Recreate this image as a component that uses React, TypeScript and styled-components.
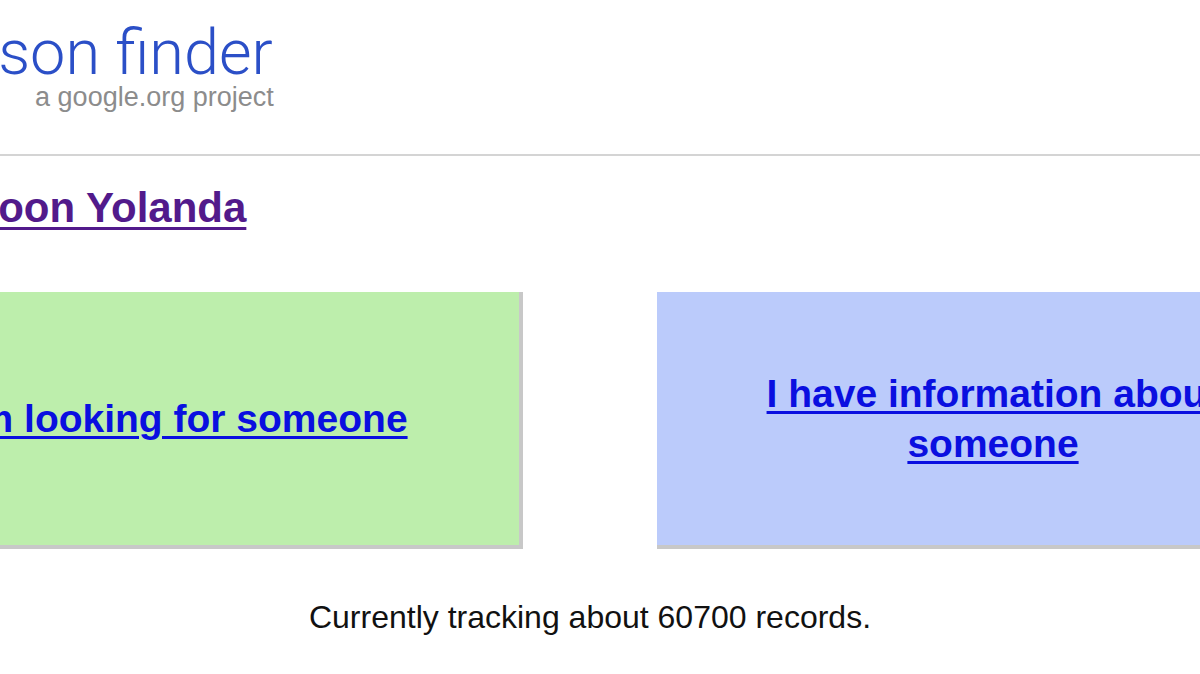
import styled, { createGlobalStyle } from "styled-components";

const GlobalStyle = createGlobalStyle`
  html, body {
    margin: 0;
    padding: 0;
    background: #ffffff;
    overflow: hidden;
  }
  body {
    font-family: "Liberation Sans", Arial, sans-serif;
  }
`;

// the page is wider than the window and sits a little off to the left,
// like the zoomed browser view in the reference
const Page = styled.div`
  width: 1486px;
  margin-left: -153px;
`;

const Header = styled.header`
  padding: 22px 0 42px 59px;
  border-bottom: 2px solid #d4d4d4;
`;

const Logo = styled.a`
  display: inline-flex;
  flex-direction: column;
  align-items: flex-end;
  text-decoration: none;
`;

const LogoName = styled.span`
  font-family: Roboto, "Open Sans", sans-serif;
  font-weight: 300;
  font-size: 63px;
  line-height: 62px;
  color: #2b4fc7;
`;

const LogoTag = styled.span`
  margin-top: -2px;
  margin-right: -1px;
  font-family: "Liberation Sans", Arial, sans-serif;
  font-size: 27px;
  line-height: 30px;
  color: #8c8c8c;
`;

const Title = styled.h1`
  margin: 28px 0 0;
  padding-left: 54px;
  font-size: 42px;
  line-height: 48px;
  font-weight: bold;
`;

const TitleLink = styled.a`
  color: #521a8b;
  text-decoration: underline;
  text-decoration-thickness: 3px;
  text-underline-offset: 5px;
`;

const Choices = styled.div`
  display: flex;
  gap: 134px;
  margin-top: 60px;
`;

const ChoiceBox = styled.div<{ $tone: "green" | "blue" }>`
  width: 552px;
  height: 253px;
  padding: 0 60px;
  display: flex;
  align-items: center;
  justify-content: center;
  text-align: center;
  background: ${(p) => (p.$tone === "green" ? "#bdeeac" : "#bbcbfb")};
  border-right: 4px solid #c8c8c8;
  border-bottom: 4px solid #c8c8c8;
`;

const ChoiceLink = styled.a`
  font-size: 39px;
  line-height: 50px;
  font-weight: bold;
  color: #0a0fe0;
  text-decoration: underline;
  text-decoration-thickness: 3px;
  text-underline-offset: 4px;
`;

const Footer = styled.p`
  margin: 50px 0 0;
  text-align: center;
  font-size: 32px;
  line-height: 37px;
  color: #111111;
`;

export default function App() {
  return (
    <>
      <GlobalStyle />
      <Page>
        <Header>
          <Logo href="#">
            <LogoName>Person finder</LogoName>
            <LogoTag>a google.org project</LogoTag>
          </Logo>
        </Header>
        <Title>
          <TitleLink href="#">Typhoon Yolanda</TitleLink>
        </Title>
        <Choices>
          <ChoiceBox $tone="green">
            <ChoiceLink href="#">I'm looking for someone</ChoiceLink>
          </ChoiceBox>
          <ChoiceBox $tone="blue">
            <ChoiceLink href="#">I have information about someone</ChoiceLink>
          </ChoiceBox>
        </Choices>
        <Footer>Currently tracking about 60700 records.</Footer>
      </Page>
    </>
  );
}
